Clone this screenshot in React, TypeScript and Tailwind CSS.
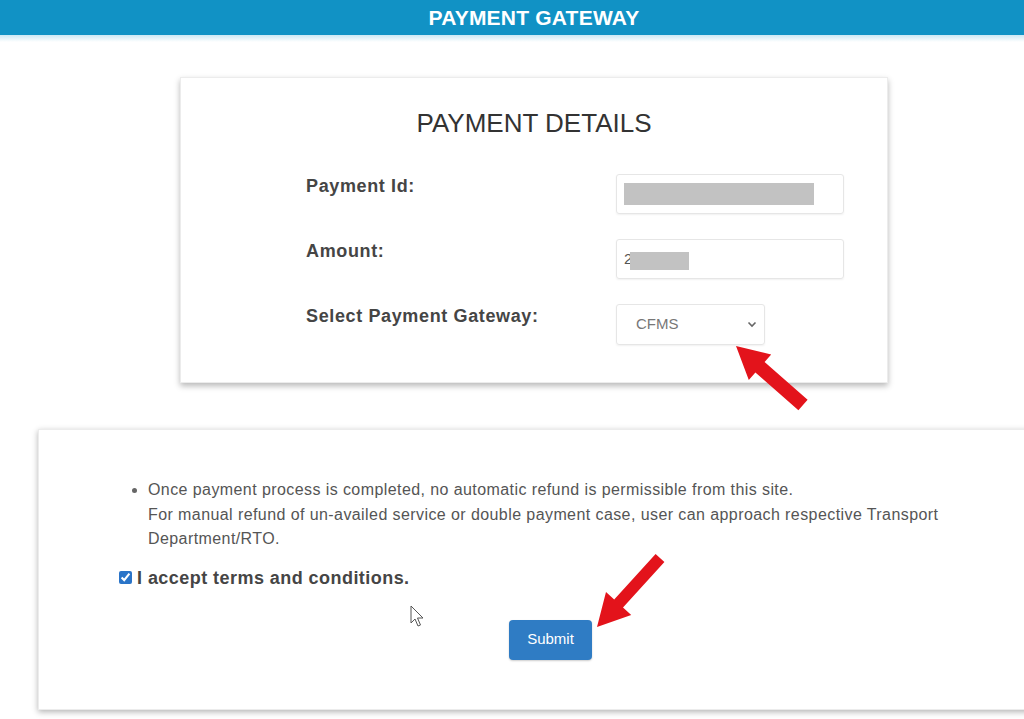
import React from 'react';

const font = { fontFamily: '"Liberation Sans", Arial, sans-serif' };

const Field = ({ label, children }: { label: string; children: React.ReactNode }) => (
  <div className="flex items-start">
    <div className="w-[310px] pt-[1px] text-[18px] leading-[22px] font-bold tracking-[0.035em] text-[#454545]">
      {label}
    </div>
    {children}
  </div>
);

export default function App() {
  return (
    <div className="relative w-full h-[719px] overflow-hidden bg-white" style={font}>
      <div className="w-[1068px]">
        <header className="h-[35px] bg-[#1192c5] flex items-center justify-center">
          <h1 className="text-[21px] leading-none font-bold text-white tracking-[0.01em]">
            PAYMENT GATEWAY
          </h1>
        </header>
        <div className="h-[7px] bg-gradient-to-b from-[#cbe8f4] to-white" />

        <div className="ml-[180px] mt-[35px] w-[708px] bg-white border border-[#ececec] shadow-[0_3px_6px_rgba(0,0,0,0.28)] pt-[30px] pb-[37px]">
          <h2 className="text-center text-[26px] leading-[30px] text-[#333]">PAYMENT DETAILS</h2>
          <div className="mt-[36px] pl-[125px] flex flex-col gap-[25px]">
            <Field label="Payment Id:">
              <div className="w-[228px] h-[40px] rounded-[3px] border border-[#e6e6e6] shadow-[0_1px_2px_rgba(0,0,0,0.06)] flex items-center pl-[7px]">
                <div className="w-[190px] h-[22px] bg-[#c2c2c2]" />
              </div>
            </Field>
            <Field label="Amount:">
              <div className="w-[228px] h-[40px] rounded-[3px] border border-[#e6e6e6] shadow-[0_1px_2px_rgba(0,0,0,0.06)] flex items-center pl-[7px] text-[15px] text-[#555]">
                <span>2</span>
                <div className="-ml-[2px] mt-[4px] w-[59px] h-[18px] bg-[#c2c2c2]" />
              </div>
            </Field>
            <Field label="Select Payment Gateway:">
              <div className="w-[149px] h-[41px] rounded-[3px] border border-[#e6e6e6] shadow-[0_1px_2px_rgba(0,0,0,0.06)] flex items-center justify-between pl-[19px] pr-[7px]">
                <span className="text-[15px] text-[#777]">CFMS</span>
                <svg width="10" height="7" viewBox="0 0 10 7" fill="none">
                  <path d="M1.5 1.5 L5 5 L8.5 1.5" stroke="#666" strokeWidth="1.6" />
                </svg>
              </div>
            </Field>
          </div>
        </div>

        <div className="ml-[38px] mt-[46px] w-[992px] h-[281px] bg-white border border-[#ececec] shadow-[0_2px_6px_rgba(0,0,0,0.3)] pt-[48px]">
          <ul className="list-disc pl-[109px] pr-[60px] text-[16px] leading-[24.5px] text-[#555] marker:text-[#666] tracking-[0.026em]">
            <li>
              Once payment process is completed, no automatic refund is permissible from this site.
              <br />
              For manual refund of un-availed service or double payment case, user can approach respective Transport
              <br />
              Department/RTO.
            </li>
          </ul>
          <label className="mt-[15px] ml-[80px] flex items-center gap-[5px]">
            <input type="checkbox" defaultChecked className="w-[13px] h-[13px] m-0 accent-[#2a74c8]" />
            <span className="text-[18px] leading-[22px] font-bold tracking-[0.025em] text-[#454545]">
              I accept terms and conditions.
            </span>
          </label>
          <button className="mt-[31px] ml-[470px] w-[83px] h-[40px] rounded-[4px] bg-[#2f7cc4] text-white text-[15px] shadow-[0_1px_2px_rgba(0,0,0,0.2)]">
            Submit
          </button>
        </div>
      </div>

      <svg className="absolute inset-0 pointer-events-none" width="1024" height="719" viewBox="0 0 1024 719">
        <polygon
          points="736,346 771.2,354.5 764.6,361.9 807.6,399.7 798.4,410.3 755.4,372.5 748.8,380"
          fill="#e3131b"
        />
        <polygon
          points="597,627 631.2,614.9 623,607.4 664.4,562 655.6,554 614.2,599.4 606,592"
          fill="#e3131b"
        />
        <path
          d="M411 606 L411 623 L415 619 L418 626 L420.5 625 L417.5 618 L423 618 Z"
          fill="#fff"
          stroke="#555"
          strokeWidth="1"
          strokeLinejoin="round"
        />
      </svg>
    </div>
  );
}
